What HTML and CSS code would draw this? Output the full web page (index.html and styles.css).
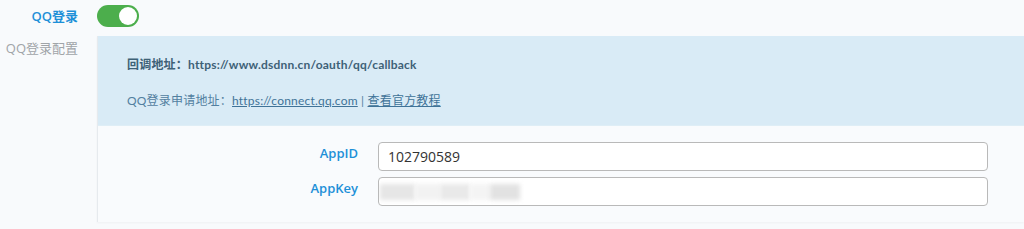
FILE: index.html
```html
<!DOCTYPE html>
<html lang="zh">
<head>
<meta charset="utf-8">
<link rel="stylesheet" href="styles.css">
</head>
<body>
<div class="row top">
  <div class="label blue">QQ登录</div>
  <div class="switch"><span class="knob"></span></div>
</div>
<div class="row config">
  <div class="label gray">QQ登录配置</div>
  <div class="panel">
    <div class="info">
      <p class="cb"><b>回调地址：</b>https://www.dsdnn.cn/oauth/qq/callback</p>
      <p class="apply">QQ登录申请地址：<a href="#">https://connect.qq.com</a> | <a href="#">查看官方教程</a></p>
    </div>
    <div class="fields">
      <div class="field">
        <label class="flabel">AppID</label>
        <div class="input">102790589</div>
      </div>
      <div class="field">
        <label class="flabel">AppKey</label>
        <div class="input blurred">
          <span class="blk b1"></span><span class="blk b2"></span><span class="blk b3"></span><span class="blk b4"></span><span class="blk b5"></span>
        </div>
      </div>
    </div>
  </div>
</div>
</body>
</html>
```

FILE: styles.css
```css
html, body { margin: 0; padding: 0; }
body {
  background: #f8fafc;
  font-family: "Segoe UI", "Open Sans", "Noto Sans", "Noto Sans CJK SC", sans-serif;
  width: 1024px;
  height: 229px;
  overflow: hidden;
}
.row { display: flex; align-items: flex-start; }
.top { padding-top: 5px; height: 36px; box-sizing: border-box; }
.label {
  width: 79px;
  text-align: right;
  font-size: 13px;
  box-sizing: border-box;
}
.blue { color: #1e90d8; font-weight: 600; padding-top: 1px; padding-right: 1px; }
.gray { color: #a0a4a8; width: 78px; padding-top: 2px; flex: none; }
.switch {
  margin-left: 18px;
  width: 42px;
  height: 22px;
  border-radius: 11px;
  background: #4cae4c;
  position: relative;
  box-sizing: border-box;
}
.knob {
  position: absolute;
  right: 2px;
  top: 2px;
  width: 18px;
  height: 18px;
  border-radius: 50%;
  background: #fff;
}
.config { height: 193px; }
.panel {
  margin-left: 19px;
  flex: 1;
  border-left: 1px solid #e6eaee;
  height: 186px;
  box-shadow: 0 1px 2px rgba(0,0,0,0.04);
  background: #f9fbfd;
}
.info {
  background: #d9ebf6;
  height: 90px;
  box-sizing: border-box;
  padding: 20px 0 0 29px;
  font-size: 12px;
  color: #3f6e8e;
  border-bottom: 1px solid #dfeef6;
  font-family: Lato, "Noto Sans CJK SC", sans-serif;
}
.info p { margin: 0; line-height: 18px; letter-spacing: 0.2px; }
.cb { color: #3e6176; font-weight: 700; }
.cb b { font-weight: 700; }
.apply { margin-top: 18px !important; color: #5280a0; }
.apply a { color: #3f7398; text-decoration: underline; }
.fields { padding-top: 16px; }
.field { display: flex; align-items: center; margin-bottom: 6px; }
.flabel {
  width: 260px;
  text-align: right;
  color: #1e90d8;
  font-weight: 600;
  font-size: 13px;
  padding-right: 20px;
  margin-top: -7px;
}
.input {
  width: 610px;
  height: 29px;
  box-sizing: border-box;
  border: 1px solid #b9b9b9;
  border-radius: 4px;
  background: #fff;
  font-size: 14px;
  color: #333;
  padding: 4px 0 0 9px;
  font-family: "Segoe UI", "Open Sans", "Noto Sans", sans-serif;
}
.blurred { display: flex; align-items: center; padding: 0 0 0 1px; overflow: hidden; }
.blk { display: block; height: 16px; filter: blur(2px); }
.b1 { width: 35px; background: #e6e6e6; }
.b2 { width: 25px; background: #f2f2f2; }
.b3 { width: 30px; background: #e9e9e9; }
.b4 { width: 20px; background: #f4f4f4; }
.b5 { width: 30px; background: #e2e2e2; }
```
